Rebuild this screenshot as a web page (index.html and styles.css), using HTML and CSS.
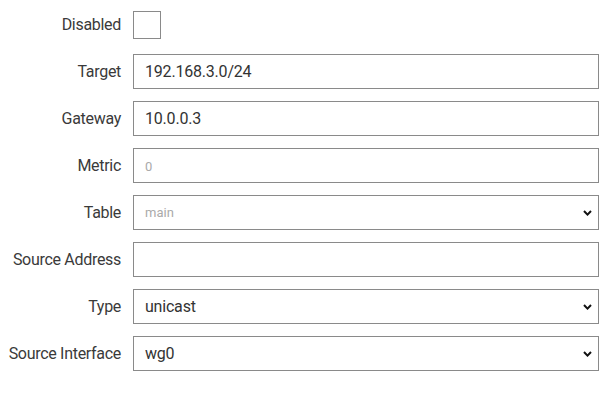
FILE: index.html
```html
<!DOCTYPE html>
<html>
<head>
<meta charset="utf-8">
<link rel="stylesheet" href="styles.css">
</head>
<body>
<form class="form">
  <label class="label" for="f-disabled">Disabled</label>
  <div class="field field-check"><input id="f-disabled" class="check" type="checkbox"></div>

  <label class="label" for="f-target">Target</label>
  <div class="field"><input id="f-target" class="input" type="text" value="192.168.3.0/24"></div>

  <label class="label" for="f-gateway">Gateway</label>
  <div class="field"><input id="f-gateway" class="input" type="text" value="10.0.0.3"></div>

  <label class="label" for="f-metric">Metric</label>
  <div class="field"><input id="f-metric" class="input" type="text" placeholder="0"></div>

  <label class="label" for="f-table">Table</label>
  <div class="field select-wrap">
    <select id="f-table" class="input select placeholder"><option>main</option></select>
    <svg class="chev" width="9" height="6" viewBox="0 0 9 6"><path d="M1 1 L4.5 4.6 L8 1" fill="none" stroke="#111" stroke-width="2"/></svg>
  </div>

  <label class="label" for="f-src">Source Address</label>
  <div class="field"><input id="f-src" class="input" type="text"></div>

  <label class="label" for="f-type">Type</label>
  <div class="field select-wrap">
    <select id="f-type" class="input select"><option>unicast</option></select>
    <svg class="chev" width="9" height="6" viewBox="0 0 9 6"><path d="M1 1 L4.5 4.6 L8 1" fill="none" stroke="#111" stroke-width="2"/></svg>
  </div>

  <label class="label" for="f-iface">Source Interface</label>
  <div class="field select-wrap">
    <select id="f-iface" class="input select"><option>wg0</option></select>
    <svg class="chev" width="9" height="6" viewBox="0 0 9 6"><path d="M1 1 L4.5 4.6 L8 1" fill="none" stroke="#111" stroke-width="2"/></svg>
  </div>
</form>
</body>
</html>
```

FILE: styles.css
```css
html, body {
  margin: 0;
  padding: 0;
  background: #fff;
}
body {
  font-family: Roboto, "Liberation Sans", sans-serif;
  font-size: 16px;
  color: #3a3a3a;
}
.form {
  display: grid;
  grid-template-columns: 113px 466px;
  grid-auto-rows: 35px;
  column-gap: 12px;
  row-gap: 12px;
  padding: 7px 0 0 8px;
}
.label {
  display: flex;
  align-items: center;
  justify-content: flex-end;
  white-space: nowrap;
  letter-spacing: -0.3px;
  color: #3a3a3a;
}
.field {
  display: flex;
  align-items: center;
}
.check {
  appearance: none;
  -webkit-appearance: none;
  margin: 0;
  width: 28px;
  height: 28px;
  border: 1px solid #8a8a8a;
  background: #fff;
  box-sizing: border-box;
}
.input {
  appearance: none;
  -webkit-appearance: none;
  box-sizing: border-box;
  width: 100%;
  height: 35px;
  margin: 0;
  padding: 0 11px;
  border: 1px solid #8a8a8a;
  border-radius: 0;
  background: #fff;
  font-family: Roboto, "Liberation Sans", sans-serif;
  font-size: 16px;
  letter-spacing: -0.2px;
  color: #333;
  outline: none;
}
.input::placeholder {
  color: #aaa;
  font-size: 13px;
  letter-spacing: 0;
}
.select.placeholder {
  color: #aaa;
  font-size: 13px;
  letter-spacing: 0;
}
.select-wrap {
  position: relative;
}
.chev {
  position: absolute;
  right: 7px;
  top: 15px;
  pointer-events: none;
}
```
